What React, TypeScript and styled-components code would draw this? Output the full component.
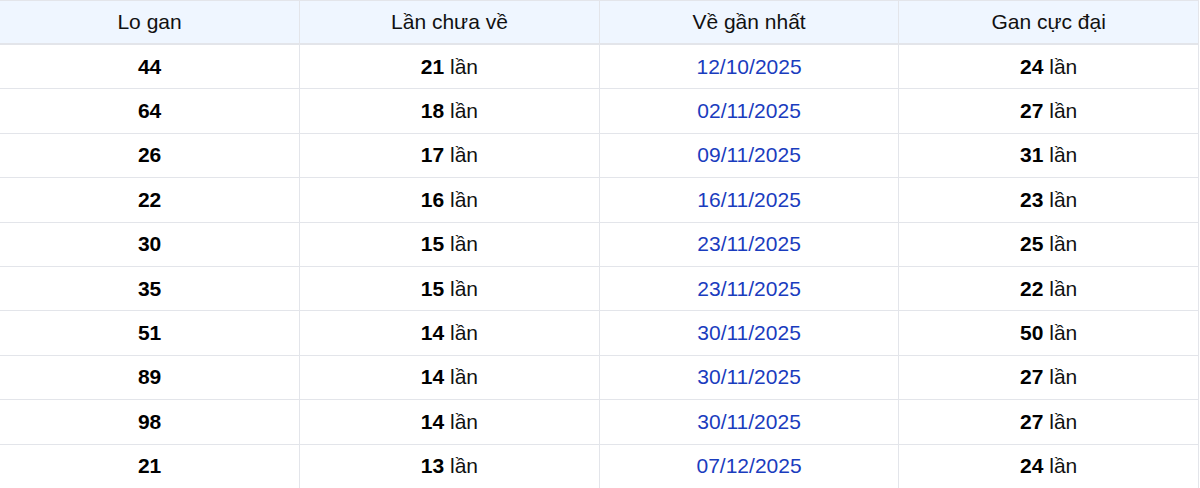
import React from 'react'
import styled, { createGlobalStyle } from 'styled-components'

const GlobalStyle = createGlobalStyle`
  html, body {
    margin: 0;
    padding: 0;
    background: #fff;
  }
  body {
    font-family: 'Liberation Sans', Arial, sans-serif;
    color: #111;
  }
`

const Table = styled.table`
  width: 1199px;
  border-collapse: collapse;
  table-layout: fixed;
  font-size: 21px;
`

const HeadCell = styled.th`
  height: 42px;
  padding: 0;
  background: #eff6ff;
  font-weight: 400;
  text-align: center;
  border: 1px solid #e3e5ea;
  border-bottom-width: 2px;
  &:first-child {
    border-left: none;
  }
`

const Cell = styled.td`
  height: 43.4px;
  padding: 0;
  text-align: center;
  border: 1px solid #e3e5ea;
  &:first-child {
    border-left: none;
  }
`

const Num = styled.b`
  font-weight: 700;
  color: #000;
`

const DateText = styled.span`
  color: #1a3cbe;
`

type Row = { lo: string; chua: number; date: string; max: number }

const rows: Row[] = [
  { lo: '44', chua: 21, date: '12/10/2025', max: 24 },
  { lo: '64', chua: 18, date: '02/11/2025', max: 27 },
  { lo: '26', chua: 17, date: '09/11/2025', max: 31 },
  { lo: '22', chua: 16, date: '16/11/2025', max: 23 },
  { lo: '30', chua: 15, date: '23/11/2025', max: 25 },
  { lo: '35', chua: 15, date: '23/11/2025', max: 22 },
  { lo: '51', chua: 14, date: '30/11/2025', max: 50 },
  { lo: '89', chua: 14, date: '30/11/2025', max: 27 },
  { lo: '98', chua: 14, date: '30/11/2025', max: 27 },
  { lo: '21', chua: 13, date: '07/12/2025', max: 24 }
]

export default function App() {
  return (
    <>
      <GlobalStyle />
      <Table>
        <thead>
          <tr>
            <HeadCell>Lo gan</HeadCell>
            <HeadCell>Lần chưa về</HeadCell>
            <HeadCell>Về gần nhất</HeadCell>
            <HeadCell>Gan cực đại</HeadCell>
          </tr>
        </thead>
        <tbody>
          {rows.map((r, i) => (
            <tr key={i}>
              <Cell>
                <Num>{r.lo}</Num>
              </Cell>
              <Cell>
                <Num>{r.chua}</Num> lần
              </Cell>
              <Cell>
                <DateText>{r.date}</DateText>
              </Cell>
              <Cell>
                <Num>{r.max}</Num> lần
              </Cell>
            </tr>
          ))}
        </tbody>
      </Table>
    </>
  )
}
